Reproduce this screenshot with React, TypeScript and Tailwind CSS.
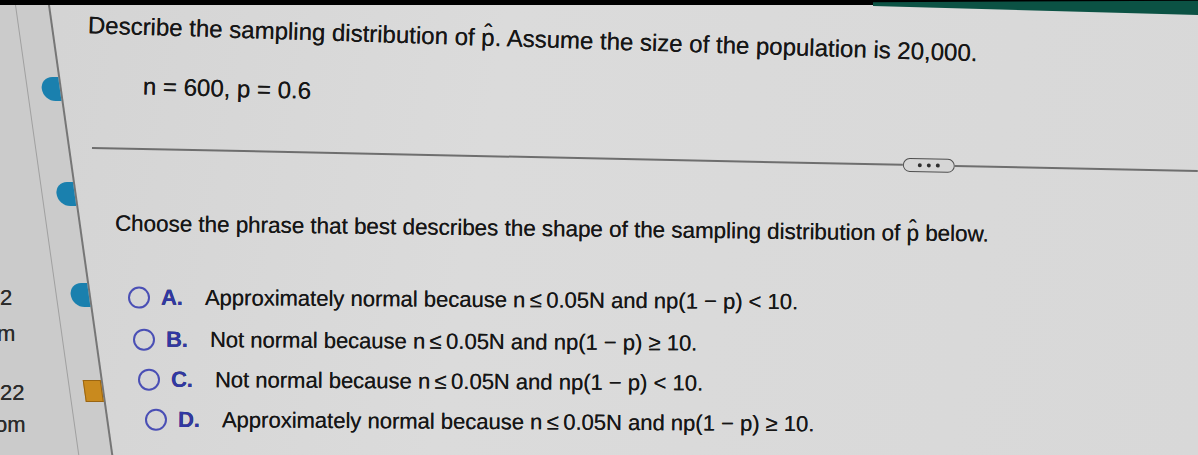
const Hat = ({ children }: { children: string }) => (
  <span className="relative inline-block">
    {children}
    <span className="absolute left-0 right-0 -top-[5px] text-center">ˆ</span>
  </span>
);

const options = [
  { key: "A.", text: "Approximately normal because n\u2009≤\u20090.05N and np(1 − p) < 10.", row: "mt-[49px] pl-[78px]" },
  { key: "B.", text: "Not normal because n\u2009≤\u20090.05N and np(1 − p) ≥ 10.", row: "mt-[18px] pl-[83px]" },
  { key: "C.", text: "Not normal because n\u2009≤\u20090.05N and np(1 − p) < 10.", row: "mt-[16px] pl-[88px]" },
  { key: "D.", text: "Approximately normal because n\u2009≤\u20090.05N and np(1 − p) ≥ 10.", row: "mt-[16px] pl-[95px]" },
];

const Sidebar = () => (
  <div className="grid w-[50px] shrink-0">
    {/* slanted panel borders + progress markers */}
    <div className="col-start-1 row-start-1 -ml-[70px] flex h-full w-[120px] origin-top-left skew-x-[8deg] bg-[#cbcbcb]">
      <div className="w-[86px] border-r border-[#a0a0a0]" />
      <div className="flex w-[34px] flex-col items-end border-r-2 border-[#767676]">
        <div className="mt-[72px] h-[24px] w-[18px] rounded-l-full bg-[#1a80ae]" />
        <div className="mt-[81px] h-[24px] w-[18px] rounded-l-full bg-[#1a80ae]" />
        <div className="mt-[77px] h-[24px] w-[18px] rounded-l-full bg-[#1a80ae]" />
        <div className="mt-[73px] h-[22px] w-[18px] border border-[#9a6512] bg-[#c98a1e]" />
      </div>
    </div>
    <div className="relative z-10 col-start-1 row-start-1 flex flex-col text-[22px] leading-[24px] text-[#2b2b2b]">
      <span className="mt-[281px]">2</span>
      <span className="-ml-[3px] mt-[12px]">m</span>
      <span className="mt-[35px]">22</span>
      <span className="-ml-[5px] mt-[8px]">om</span>
    </div>
  </div>
);

export default function App() {
  return (
    <div className="flex h-[455px] w-[1198px] flex-col overflow-hidden bg-[linear-gradient(100deg,#d3d3d3_0%,#dbdbdb_40%,#d8d8d8_100%)] font-['Liberation_Sans',Arial,sans-serif] text-[#161616] [text-shadow:0_0_0.5px_#333]">
      <div className="relative z-10 flex h-[5px] shrink-0 bg-black">
        <div className="flex-1" />
        <div className="h-[15px] w-[325px] shrink-0 bg-[#0b5244] [clip-path:polygon(0_15%,100%_5%,100%_100%,0_40%)]" />
      </div>

      <div className="flex flex-1">
        <Sidebar />

        <div className="relative flex flex-1 flex-col">
          <div className="mt-[5px] origin-left rotate-[1.8deg] whitespace-nowrap pl-[38px] text-[24px] leading-[28px]">
            Describe the sampling distribution of <Hat>p</Hat>. Assume the size of the population is 20,000.
          </div>

          <div className="mt-[32px] origin-left rotate-[1.5deg] pl-[93px] text-[24px] leading-[28px]">
            n = 600, p = 0.6
          </div>

          <div className="mt-[42px] flex h-[14px] origin-left rotate-[1.2deg] items-center pl-[42px]">
            <div className="h-[2px] w-[811px] bg-[#6e6e6e]" />
            <button className="flex h-[14px] w-[52px] shrink-0 items-center justify-center gap-[5px] rounded-full border-[1.5px] border-[#4e4e4e] bg-[#d6d6d6]">
              <span className="h-[4px] w-[4px] rounded-full bg-[#2e2e2e]" />
              <span className="h-[4px] w-[4px] rounded-full bg-[#2e2e2e]" />
              <span className="h-[4px] w-[4px] rounded-full bg-[#2e2e2e]" />
            </button>
            <div className="h-[2px] flex-1 bg-[#6e6e6e]" />
          </div>

          <div className="mt-[56px] origin-left rotate-[0.7deg] whitespace-nowrap pl-[65px] text-[22.4px] leading-[26px]">
            Choose the phrase that best describes the shape of the sampling distribution of <Hat>p</Hat> below.
          </div>

          {options.map((o) => (
            <div key={o.key} className={`${o.row} flex origin-left rotate-[0.4deg] items-center whitespace-nowrap text-[22px] leading-[24px]`}>
              <span className="mr-[11px] h-[22px] w-[22px] shrink-0 rounded-full border-2 border-[#4a4fb5]" />
              <span className="w-[44px] shrink-0 font-bold text-[#3138a4]">{o.key}</span>
              <span>{o.text}</span>
            </div>
          ))}
        </div>
      </div>
    </div>
  );
}
